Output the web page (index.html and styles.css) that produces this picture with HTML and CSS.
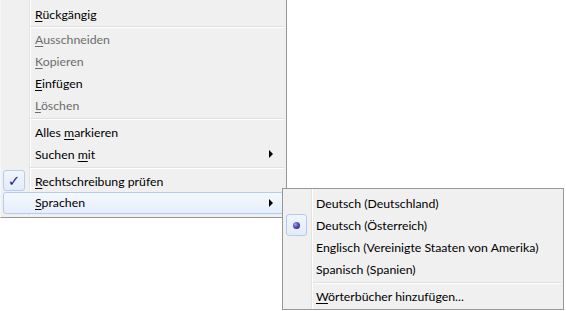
FILE: index.html
```html
<!DOCTYPE html>
<html>
<head>
<meta charset="utf-8">
<link rel="stylesheet" href="styles.css">
</head>
<body>
<div class="screen">
  <div class="menu main">
    <div class="item"><span><u>R</u>ückgängig</span></div>
    <div class="sep first"></div>
    <div class="item disabled"><span><u>A</u>usschneiden</span></div>
    <div class="item disabled"><span><u>K</u>opieren</span></div>
    <div class="item"><span><u>E</u>infügen</span></div>
    <div class="item disabled"><span><u>L</u>öschen</span></div>
    <div class="sep"></div>
    <div class="item"><span>Alles <u>m</u>arkieren</span></div>
    <div class="item sub"><span>Suchen <u>m</u>it</span><i class="arrow"></i></div>
    <div class="sep"></div>
    <div class="item"><b class="mark check">✓</b><span><u>R</u>echtschreibung prüfen</span></div>
    <div class="item sub hot"><span><u>S</u>prachen</span><i class="arrow"></i></div>
  </div>
  <div class="menu submenu">
    <div class="item"><span>Deutsch (Deutschland)</span></div>
    <div class="item"><b class="mark radio"><i class="dot"></i></b><span>Deutsch (Österreich)</span></div>
    <div class="item"><span>Englisch (Vereinigte Staaten von Amerika)</span></div>
    <div class="item"><span>Spanisch (Spanien)</span></div>
    <div class="sep"></div>
    <div class="item"><span><u>W</u>örterbücher hinzufügen...</span></div>
  </div>
</div>
</body>
</html>
```
FILE: styles.css
```css
html, body {
  margin: 0;
  padding: 0;
  background: #ffffff;
}
.screen {
  position: relative;
  width: 566px;
  height: 311px;
  overflow: hidden;
  font-family: "Lato", "Noto Sans", sans-serif;
  font-size: 12.3px;
  color: #000;
}
.menu {
  background-color: #f0f0f0;
  box-sizing: border-box;
}
.main {
  width: 287px;
  height: 218px;
  padding: 3px 2px 3px 2px;
  border-left: 1px solid #f7f7f7;
  border-right: 1px solid #979797;
  border-bottom: 1px solid #979797;
  background-image: linear-gradient(to right, transparent 28px, #e2e3e3 28px, #e2e3e3 29px, #ffffff 29px, #ffffff 30px, transparent 30px);
}
.submenu {
  position: absolute;
  left: 282px;
  top: 188px;
  width: 282px;
  height: 122px;
  padding: 3px 2px 2px 3px;
  border: 1px solid #979797;
  background-image: linear-gradient(to right, transparent 28px, #e2e3e3 28px, #e2e3e3 29px, #ffffff 29px, #ffffff 30px, transparent 30px);
}
.item {
  position: relative;
  height: 22px;
  line-height: 22px;
  padding-left: 32px;
  padding-top: 2px;
  display: flex;
  align-items: center;
  white-space: nowrap;
  box-sizing: border-box;
}
.submenu .item {
  padding-left: 30px;
}
.item u {
  text-decoration: underline;
  text-underline-offset: 2px;
}
.disabled {
  color: #6d6d6d;
}
.sep {
  height: 5px;
  margin-left: 27px;
  background-image: linear-gradient(to bottom, transparent 2px, #e0e0e0 2px, #e0e0e0 3px, #ffffff 3px, #ffffff 4px, transparent 4px);
}
.sep.first {
  height: 3px;
  background-image: linear-gradient(to bottom, transparent 1px, #e0e0e0 1px, #e0e0e0 2px, #ffffff 2px, #ffffff 3px, transparent 3px);
}
.hot {
  border: 1px solid #b4cdef;
  border-radius: 3px;
  background: linear-gradient(to bottom, #f4f8fd, #e5eefb);
  padding-left: 31px;
  padding-top: 0;
}
.arrow {
  position: absolute;
  right: 11px;
  top: 7px;
  width: 0;
  height: 0;
  border-top: 4px solid transparent;
  border-bottom: 4px solid transparent;
  border-left: 4px solid #000;
}
.hot .arrow {
  right: 10px;
  top: 6px;
}
.mark {
  position: absolute;
  left: 0;
  top: 0;
  width: 22px;
  height: 21px;
  box-sizing: border-box;
  border: 1px solid #b4cdef;
  border-radius: 3px;
  background: linear-gradient(to bottom, #f1f6fd, #e2ebf9);
  display: flex;
  align-items: center;
  justify-content: center;
  font-weight: normal;
}
.check {
  color: #1b2a8e;
  font-family: "DejaVu Sans", sans-serif;
  font-size: 15px;
  line-height: 1;
  padding-top: 1px;
}
.radio {
  left: 0;
  width: 21px;
  height: 22px;
}
.dot {
  width: 7px;
  height: 7px;
  border-radius: 50%;
  background: radial-gradient(circle at 35% 35%, #a3a6e8 0%, #4d4fb0 45%, #1e1f6e 100%);
}
```
